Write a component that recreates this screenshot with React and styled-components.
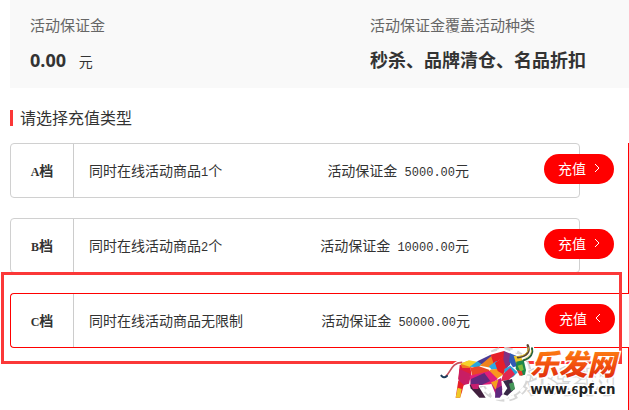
import React, { useState } from 'react'
import styled, { createGlobalStyle } from 'styled-components'

const tiers = [
  { id: 'A', text: ['同时在线活动商品', '1', '个'], deposit: '5000.00' },
  { id: 'B', text: ['同时在线活动商品', '2', '个'], deposit: '10000.00' },
  { id: 'C', text: ['同时在线活动商品无限制'], deposit: '50000.00' }
]

function Chevron ({ left }) {
  return (
    <svg width='6' height='10' viewBox='0 0 6 10' fill='none' stroke='#fff'>
      <path d={left ? 'M5 1L1 5l4 4' : 'M1 1l4 4-4 4'} />
    </svg>
  )
}

function Tier ({ tier, open, onToggle }) {
  const [before, count, after] = tier.text
  return (
    <Card $open={open}>
      <Grade>
        <Latin>{tier.id}</Latin>档
      </Grade>
      <Description>
        {before}
        {count && <Latin>{count}</Latin>}
        {after}
      </Description>
      <Deposit>
        活动保证金<Latin> {tier.deposit}</Latin>元
      </Deposit>
      <Recharge $open={open} onClick={onToggle}>
        充值
        <Chevron left={open} />
      </Recharge>
      {open && <Marker />}
    </Card>
  )
}

function Logo () {
  return (
    <LogoBox viewBox='0 0 582 225' role='img' aria-label='乐发网 www.6pf.cn'>
      <defs>
        <linearGradient id='fire' x1='0' y1='0' x2='0' y2='1'>
          <stop offset='0.1' stopColor='#ff8a12' />
          <stop offset='0.5' stopColor='#f4560f' />
          <stop offset='1' stopColor='#d81f0c' />
        </linearGradient>
      </defs>
      <g fill='none' stroke='#d6d6d6'>
        <circle cx='208' cy='118' r='75' strokeDasharray='24 15' strokeWidth='14' />
        <circle cx='208' cy='118' r='70' strokeWidth='6' />
        <circle cx='208' cy='118' r='72' strokeDasharray='16 23' strokeDashoffset='-4' strokeWidth='10' stroke='#fff' />
      </g>
      <Ghost x='280' y='172'>兆学网</Ghost>
      <g fill='none' strokeLinecap='round' strokeLinejoin='round'>
        <path
          stroke='#fff'
          strokeWidth='12'
          fill='#fff'
          d='M76 84L103 76l24 3 40-20 40-11 34 13 22 6 12 30-4 20-22 3-16 16 8 28-29 22-22 2-11 0-17-42-46 2 24 44h-22l-35-44-22-4-14 48H62l10-66z'
        />
        <path stroke='#fff' strokeWidth='12' d='M22 124c24 10 22-42 58-42M252 65c28-2 35-18 27-34M266 74c26-7 30-22 25-37' />
        <path stroke='#c8505c' strokeWidth='5' d='M34 122c12-10 18-40 46-40' />
        <path stroke='#1c3c5a' strokeWidth='6' d='M19 122c5 6 10 7 17 1' />
      </g>
      <g strokeLinejoin='round'>
        <path fill='#e01e3c' d='M74 90l32 2 4 34-24 26-16-20z' />
        <path fill='#f0781e' d='M76 86l24-9 10 22-28 0z' />
        <path fill='#f5d22a' d='M76 86l26-10 24 4-20 16z' />
        <path fill='#28a5dc' d='M104 95l23-16 20 1-16 17z' />
        <path fill='#c81e64' d='M74 102l34 16-6 28-24 6-8-20z' />
        <path fill='#eb4628' d='M106 98l26-4 30 10 8 16-58 2z' />
        <path fill='#4b3c96' d='M127 79l40-20 6 16-28 16z' />
        <path fill='#f0821e' d='M134 92l34-28 16 16-8 20z' />
        <path fill='#e61e28' d='M167 59l40-11 6 14-37 24z' />
        <path fill='#2daae6' d='M162 94l22-16 20 22-34 4z' />
        <path fill='#fa961e' d='M164 104l40-4 4 16-26 18-16-10z' />
        <path fill='#e11e78' d='M104 122l60-14 24 24-22 16-58 4z' />
        <path fill='#64287d' d='M108 132l40-18 18 24-26 12h-34z' />
        <path fill='#e61e28' d='M180 84l28-22 12 30-16 26-16-10z' />
        <path fill='#823282' d='M207 48l20 8-2 34-12 8-8-24z' />
        <path fill='#325ab4' d='M225 55l20 8 3 30-14 4-12-18z' />
        <path fill='#f0c828' d='M236 62l22 4 6 12-20 10z' />
        <path fill='#28a5dc' d='M208 102l18-10 22 20-14 14-26 8z' />
        <path fill='#e12850' d='M204 118l22-20 14 20-20 18-22 2z' />
        <path fill='#1e874b' d='M244 80l22-5 7 30-3 14-12 3-16-21z' />
        <path fill='#82be3c' d='M248 92l14-4 4 16-10 6z' />
        <path fill='#e63728' d='M246 106l14 2 4 12-10 2z' />
        <path fill='#e61e28' d='M70 136l16 14-5 20-6 18H62z' />
        <path fill='#f0c828' d='M68 158l12 4-4 26H62z' />
        <path fill='#41203e' d='M104 149l26 4 22 35h-19l-26-28z' />
        <path fill='#c81e6e' d='M106 148l26-2-2 16-16 0z' />
        <path fill='#c81e78' d='M168 144l30-15 4 36-18 18z' />
        <path fill='#f5a01e' d='M168 142l22-8-8 30z' />
        <path fill='#5f287d' d='M182 162l18-10 2 26-8 10h-14z' />
        <path fill='#372846' d='M204 138l27-6 8 30-22 20-12-4 12-18z' />
        <path fill='#46965a' d='M222 146l14-4 4 20-12 6z' />
      </g>
      <g fill='none' strokeLinecap='round'>
        <path stroke='#5a4632' strokeWidth='7' d='M249 67c29-4 37-18 29-36' />
        <path stroke='#e6c335' strokeWidth='3' d='M251 64c20-2 30-13 29-26' />
        <path stroke='#26643c' strokeWidth='6' d='M266 76c22-6 29-22 25-36' />
        <path stroke='#e6c335' strokeWidth='2' d='M270 70c14-6 19-15 20-24' />
      </g>
      <Brand x='285' y='121'>乐发网</Brand>
      <Domain x='286' y='176'>www.<tspan fontSize='30'>6</tspan>pf.cn</Domain>
    </LogoBox>
  )
}

function App () {
  const [openTier, setOpenTier] = useState('C')
  return (
    <Page>
      <GlobalStyle />
      <Summary>
        <div>
          <Label>活动保证金</Label>
          <Value>
            0.00 <Unit>元</Unit>
          </Value>
        </div>
        <div>
          <Label>活动保证金覆盖活动种类</Label>
          <Value>秒杀、品牌清仓、名品折扣</Value>
        </div>
      </Summary>
      <Title>请选择充值类型</Title>
      <Body>
        <List>
          {tiers.map(tier => (
            <Tier
              key={tier.id}
              tier={tier}
              open={openTier === tier.id}
              onToggle={() => setOpenTier(openTier === tier.id ? null : tier.id)}
            />
          ))}
        </List>
        <Rail />
      </Body>
      <Logo />
    </Page>
  )
}

export default App

const GlobalStyle = createGlobalStyle`
  * {
    box-sizing: border-box;
  }
  body {
    margin: 0;
    background: #fff;
    color: #333;
    font-family: 'Open Sans', 'Noto Sans CJK SC', sans-serif;
    font-size: 14px;
  }
`
const Page = styled.main`
  position: relative;
  display: flex;
  flex-direction: column;
  min-height: 100vh;
  padding-left: 10px;
  overflow: hidden;
`
const Summary = styled.section`
  display: grid;
  grid-template-columns: 340px 1fr;
  padding: 15px 0 14px 20px;
  background: #f9f9f9;
`
const Label = styled.div`
  color: #666;
  font-size: 15px;
  line-height: 20px;
`
const Value = styled.div`
  height: 28px;
  margin-top: 11px;
  font-size: 18px;
  font-weight: 700;
  line-height: 28px;
`
const Unit = styled.span`
  margin-left: 8px;
  font-size: 14px;
  font-weight: 400;
`
const Title = styled.h2`
  margin: 22px 0 17px;
  padding-left: 7px;
  border-left: 3px solid #fb3737;
  font-size: 16px;
  font-weight: 400;
  line-height: 16px;
`
const Body = styled.div`
  display: flex;
  flex: 1;
`
const List = styled.div`
  display: flex;
  flex: 1;
  flex-direction: column;
  gap: 20px;
`
const Rail = styled.aside`
  width: 1px;
  background: #f00;
`
const Card = styled.article`
  position: relative;
  display: flex;
  align-items: center;
  height: 55px;
  margin-right: ${props => (props.$open ? '-1px' : '48px')};
  border: 1px solid ${props => (props.$open ? '#f00' : '#d0d0d0')};
  border-right-width: ${props => (props.$open ? '0' : '1px')};
  border-radius: ${props => (props.$open ? '4px 0 0 4px' : '4px')};
  background: #fff;
`
const Latin = styled.span`
  font-family: 'Liberation Mono', monospace;
  font-size: 12px;
  white-space: pre;
`
const Grade = styled.div`
  width: 63px;
  height: 53px;
  border-right: 1px solid #ccc;
  font-weight: 700;
  line-height: 53px;
  text-align: center;
  ${Latin} {
    font-family: 'Liberation Serif', serif;
  }
`
const Description = styled.div`
  flex: 1;
  padding: 0 0 2px 15px;
`
const Deposit = styled.div`
  padding: 0 75px 2px 0;
`
const Recharge = styled.button`
  display: flex;
  flex: none;
  align-items: center;
  align-self: flex-start;
  gap: 8px;
  width: 70px;
  height: 30px;
  margin: 10px ${props => (props.$open ? '14px' : '-35px')} 0 0;
  padding: 0 14px 2px;
  border: 0;
  border-radius: 15px;
  background: #f00;
  color: #fff;
  font: inherit;
  cursor: pointer;
`
const Marker = styled.div`
  position: absolute;
  top: -22px;
  right: 7px;
  bottom: -17px;
  left: -10px;
  border: 3px solid #fb3838;
  pointer-events: none;
`
const LogoBox = styled.svg`
  position: absolute;
  right: 0;
  bottom: 0;
  width: 194px;
  height: 75px;
  pointer-events: none;
`
const Brand = styled.text`
  fill: url(#fire);
  stroke: #fff;
  stroke-width: 8px;
  paint-order: stroke;
  font-family: 'Noto Sans CJK SC', sans-serif;
  font-size: 86px;
  font-style: italic;
  font-weight: 900;
`
const Ghost = styled(Brand)`
  fill: #fff;
  stroke: #d6d6d6;
  font-style: normal;
`
const Domain = styled.text`
  fill: #222;
  stroke: #fff;
  stroke-width: 8px;
  paint-order: stroke;
  font-family: 'DejaVu Sans', sans-serif;
  font-size: 40px;
  font-weight: 700;
`
